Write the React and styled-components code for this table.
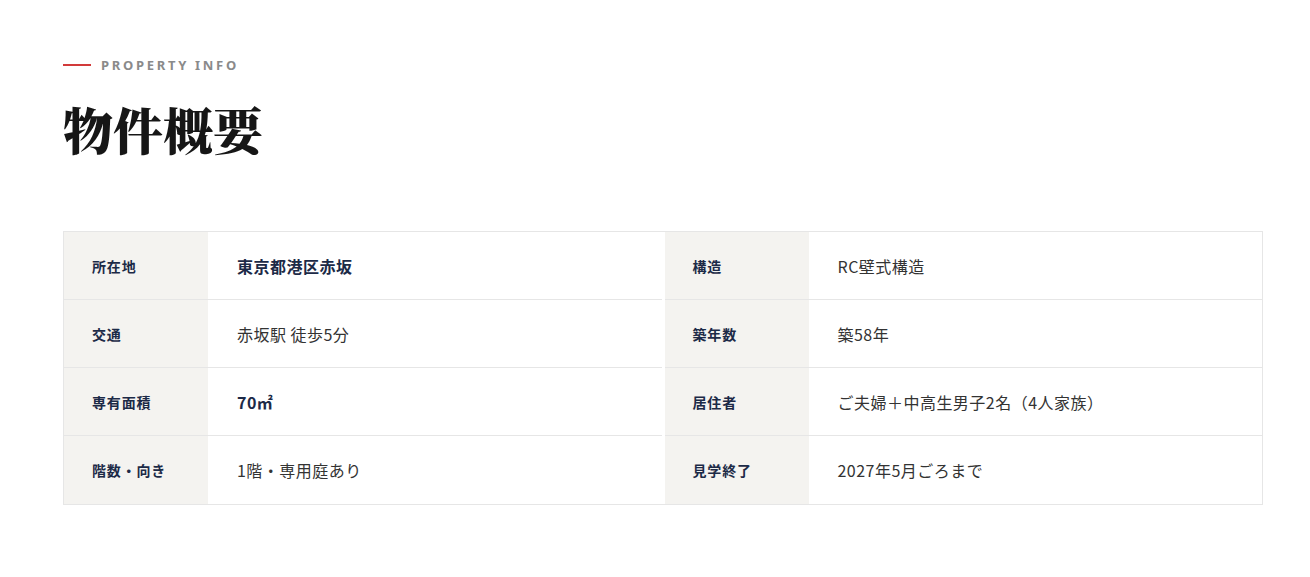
import React from 'react';
import styled, { createGlobalStyle } from 'styled-components';

const GlobalStyle = createGlobalStyle`
    * { box-sizing: border-box; }
    body {
        margin: 0;
        background: #fff;
        font-family: "Noto Sans CJK JP", "Noto Sans", sans-serif;
        color: #333;
    }
`;

const Section = styled.section`
    width: 1200px;
    margin-left: 63px;
    padding-top: 56px;
    padding-bottom: 73px;
`;

const Eyebrow = styled.div`
    display: flex;
    align-items: center;
    gap: 10px;
    color: #8a8a8a;
    font-family: "Noto Sans", "Noto Sans CJK JP", sans-serif;
    font-size: 13px;
    font-weight: 700;
    letter-spacing: 2.7px;
    line-height: 18px;

    &::before {
        content: "";
        width: 28px;
        height: 2px;
        background: #d23a3a;
    }
`;

const Title = styled.h2`
    margin: 19px 0 0;
    font-family: "Noto Serif CJK JP", "Noto Sans CJK JP", serif;
    font-size: 50px;
    font-weight: 900;
    line-height: 70px;
    color: #161616;
    letter-spacing: 0;
`;

const Table = styled.div`
    margin-top: 68px;
    border: 1px solid #e6e6e6;
    display: grid;
    grid-template-columns: 1fr 1fr;
    column-gap: 3px;
`;

const Row = styled.dl`
    margin: 0;
    display: flex;
    height: 68px;
    border-bottom: ${p => (p.last ? 'none' : '1px solid #e6e6e6')};
`;

const Label = styled.dt`
    width: 144px;
    flex: none;
    background: #f4f3f0;
    display: flex;
    align-items: center;
    padding-left: 28px;
    font-size: 14px;
    font-weight: 700;
    letter-spacing: 0.06em;
    color: #1c2a47;
`;

const Value = styled.dd`
    margin: 0;
    flex: 1;
    display: flex;
    align-items: center;
    padding-left: 29px;
    font-size: 16px;
    font-weight: ${p => (p.strong ? 700 : 400)};
    letter-spacing: 0.03em;
    color: ${p => (p.strong ? '#1c2a47' : '#333')};
`;

const items = [
    { label: '所在地', value: '東京都港区赤坂', strong: true },
    { label: '構造', value: 'RC壁式構造' },
    { label: '交通', value: '赤坂駅 徒歩5分' },
    { label: '築年数', value: '築58年' },
    { label: '専有面積', value: '70㎡', strong: true },
    { label: '居住者', value: 'ご夫婦＋中高生男子2名（4人家族）' },
    { label: '階数・向き', value: '1階・専用庭あり' },
    { label: '見学終了', value: '2027年5月ごろまで' },
];

const App = () => (
    <>
        <GlobalStyle />
        <Section>
            <Eyebrow>PROPERTY INFO</Eyebrow>
            <Title>物件概要</Title>
            <Table>
                {items.map((item, i) => (
                    <Row key={item.label} last={i >= items.length - 2}>
                        <Label>{item.label}</Label>
                        <Value strong={item.strong}>{item.value}</Value>
                    </Row>
                ))}
            </Table>
        </Section>
    </>
);

export default App;
